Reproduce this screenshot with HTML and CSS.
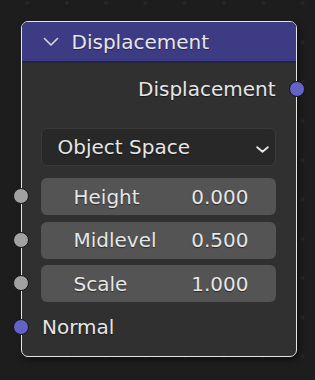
FILE: index.html
```html
<!DOCTYPE html>
<html lang="en">
<head>
    <meta charset="UTF-8">
    <meta name="viewport" content="width=device-width, initial-scale=1.0">
    <title>Displacement</title>
    <link rel="stylesheet" href="styles.css">
</head>
<body>
    <div class="node">
        <div class="node-header">
            <svg class="collapse" width="16" height="10" viewBox="0 0 16 10">
                <polyline points="1.5,1.5 8,8 14.5,1.5" fill="none" stroke="#d8d8e4" stroke-width="1.6" stroke-linecap="round" stroke-linejoin="round"/>
            </svg>
            <span>Displacement</span>
        </div>

        <div class="node-body">
            <div class="socket-row output-row">
                <span class="label">Displacement</span>
                <span class="socket vector out"></span>
            </div>

            <div class="socket-row select-row">
                <div class="select">
                    <span>Object Space</span>
                    <svg width="13" height="7" viewBox="0 0 13 7">
                        <polyline points="1.2,1.2 6.5,5.8 11.8,1.2" fill="none" stroke="#e8e8e8" stroke-width="1.8" stroke-linecap="round" stroke-linejoin="round"/>
                    </svg>
                </div>
            </div>

            <div class="fields">
                <div class="socket-row">
                    <span class="socket float in"></span>
                    <div class="field"><span>Height</span><span>0.000</span></div>
                </div>
                <div class="socket-row">
                    <span class="socket float in"></span>
                    <div class="field"><span>Midlevel</span><span>0.500</span></div>
                </div>
                <div class="socket-row">
                    <span class="socket float in"></span>
                    <div class="field"><span>Scale</span><span>1.000</span></div>
                </div>
            </div>

            <div class="socket-row input-row">
                <span class="socket vector in"></span>
                <span class="label">Normal</span>
            </div>
        </div>
    </div>
</body>
</html>
```

FILE: styles.css
```css
:root {
    --bg: #1d1d1d;
    --grid-dot: #272727;
    --node-bg: #303030;
    --header-bg: #3d3b84;
    --outline: #e4e4e4;
    --text: #e6e6e6;
    --field-bg: #545454;
    --select-bg: #282828;
    --select-border: #3b3b3b;
    --socket-vector: #6363c7;
    --socket-float: #a1a1a1;
}

html, body {
    margin: 0;
    height: 100%;
}
body {
    font-family: "DejaVu Sans", Arial, sans-serif;
    font-size: 20px;
    color: var(--text);
    background-color: var(--bg);
    background-image: radial-gradient(circle, var(--grid-dot) 1.6px, transparent 2.1px);
    background-size: 39.3px 39.3px;
    background-position: 7.85px -16.65px;
    padding: 21px 0 0 21px;
    box-sizing: border-box;
}
.node {
    width: 276px;
    box-sizing: border-box;
    border: 1.5px solid var(--outline);
    border-radius: 7px;
    background-color: var(--node-bg);
    box-shadow: 2px 3px 6px rgba(0, 0, 0, 0.45);
}
.node-header {
    height: 39px;
    display: flex;
    align-items: center;
    gap: 13px;
    padding-left: 20.5px;
    background-color: var(--header-bg);
    border-bottom: 2px solid #26263a;
    border-radius: 5.5px 5.5px 0 0;
    text-shadow: 0 1px 1px rgba(0, 0, 0, 0.4);
}
.collapse {
    margin-top: 1px;
}
.node-body {
    padding: 8px 0 13px;
}
.socket-row {
    position: relative;
    display: flex;
    align-items: center;
    padding: 0 20.5px 0 18.5px;
}
.label {
    text-shadow: 0 1px 1px rgba(0, 0, 0, 0.5);
}
.output-row {
    height: 36px;
    justify-content: flex-end;
}
.input-row {
    height: 32px;
    margin-top: 9px;
    padding-left: 20px;
}
.select-row {
    margin-top: 21px;
}
.select {
    flex: 1;
    height: 38px;
    box-sizing: border-box;
    display: flex;
    align-items: center;
    justify-content: space-between;
    padding: 0 6px 0 16px;
    background-color: var(--select-bg);
    border: 1px solid var(--select-border);
    border-radius: 6px;
    text-shadow: 0 1px 1px rgba(0, 0, 0, 0.5);
}
.select svg {
    margin-top: 4px;
}
.fields {
    margin-top: 12px;
    display: flex;
    flex-direction: column;
    gap: 6.5px;
}
.field {
    flex: 1;
    height: 37px;
    display: flex;
    align-items: center;
    justify-content: space-between;
    padding: 0 27px 0 33px;
    background-color: var(--field-bg);
    border-radius: 6px;
    text-shadow: 0 1px 1px rgba(0, 0, 0, 0.5);
}
.socket {
    position: absolute;
    top: 50%;
    width: 14px;
    height: 14px;
    margin-top: -8.5px;
    border: 1.5px solid #161616;
    border-radius: 50%;
}
.socket.in {
    left: -9.25px;
}
.socket.out {
    right: -9.25px;
}
.socket.vector {
    background-color: var(--socket-vector);
}
.socket.float {
    background-color: var(--socket-float);
}
```
